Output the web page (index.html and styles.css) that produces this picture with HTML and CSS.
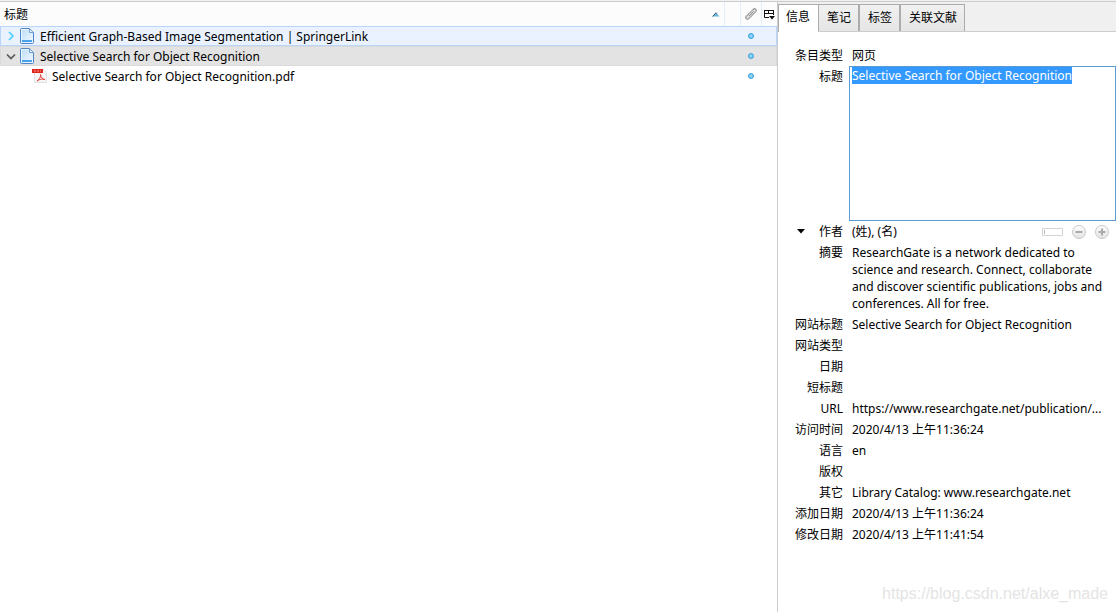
FILE: index.html
```html
<!DOCTYPE html>
<html lang="zh-CN">
<head>
<meta charset="utf-8">
<title>Zotero</title>
<link rel="stylesheet" href="styles.css">
</head>
<body>
<svg class="defs" aria-hidden="true">
  <defs>
    <linearGradient id="page-fill" x1="0" y1="0" x2="1" y2="1"><stop offset="0" stop-color="#b9dcf8"/><stop offset="1" stop-color="#f4faff"/></linearGradient>
    <linearGradient id="btn-fill" x1="0" y1="0" x2="0" y2="1"><stop offset="0" stop-color="#ffffff"/><stop offset="1" stop-color="#e2e2e2"/></linearGradient>
    <radialGradient id="dot-fill"><stop offset="0" stop-color="#a5e0fa"/><stop offset="1" stop-color="#62bdec"/></radialGradient>
    <symbol id="doc" viewBox="0 0 16 16">
      <path d="M.5 1.500a1 1 0 0 1 1-1H9.500l4 4v10a1 1 0 0 1-1 1h-11a1 1 0 0 1-1-1z" fill="url(#page-fill)" stroke="#5286c6"/>
      <path d="M1.500 14V1.500H9" fill="none" stroke="#e9f5ff"/>
      <path d="M9.500 1v3.500h4z" fill="#fff" stroke="#6f9fd3"/>
      <path d="M2 13h10" stroke="#4aa3ea" stroke-width="2"/>
    </symbol>
    <symbol id="dot" viewBox="0 0 6 6">
      <circle cx="3" cy="3" r="2.500" fill="url(#dot-fill)" stroke="#3ea3da"/>
    </symbol>
  </defs>
</svg>
<div class="window">
  <main class="items">
    <table class="tree">
      <colgroup><col><col class="col-spare"><col class="col-clip"><col class="col-picker"></colgroup>
      <thead>
        <tr>
          <th scope="col"><button class="head-btn sort" type="button"><span>标题</span><svg width="8" height="5" viewBox="0 0 8 5" aria-hidden="true"><path d="M.5 4.500 4 .8l3.500 3.700z" fill="#6fb3d8"/><path d="M.5 4.500 4 .8l1 1" fill="none" stroke="#2f5f7c"/></svg></button></th>
          <th scope="col"></th>
          <th scope="col"><button class="head-btn center" type="button" aria-label="附件"><svg width="12" height="12" viewBox="0 0 12 12" fill="none"><path d="M2.500 9.500 9.500 2.500" stroke="#8c8c8c" stroke-width="4.500" stroke-linecap="round"/><path d="M2.500 9.500 9.500 2.500" stroke="#dcdcdc" stroke-width="2.500" stroke-linecap="round"/><path d="M4 8l4.500-4.500" stroke="#8c8c8c"/></svg></button></th>
          <th scope="col"><button class="head-btn center" type="button" aria-label="选择列"><svg width="11" height="11" viewBox="0 0 11 11" fill="none"><path d="M5 8.500H.500V1.500h9V6M1 4.500h8M4.500 2v3" stroke="#111"/><path d="M0 1.500h10" stroke="#111"/><path d="M5 7h6L8 10.500z" fill="#111"/></svg></button></th>
        </tr>
      </thead>
      <tbody>
        <tr class="hovered">
          <td><div class="cell"><button class="twisty" type="button" aria-label="展开"><svg width="9" height="10" viewBox="0 0 9 10" fill="none"><path d="M2 1l4 4-4 4" stroke="#4ed0f9" stroke-width="1.700"/></svg></button><svg class="icon" aria-hidden="true"><use href="#doc"/></svg><span>Efficient Graph-Based Image Segmentation | SpringerLink</span></div></td>
          <td></td><td class="mark"><svg width="6" height="6"><use href="#dot"/></svg></td><td></td>
        </tr>
        <tr class="selected">
          <td><div class="cell"><button class="twisty" type="button" aria-label="折叠"><svg width="10" height="9" viewBox="0 0 10 9" fill="none"><path d="M1 2.500l4 4 4-4" stroke="#595959" stroke-width="1.700"/></svg></button><svg class="icon" aria-hidden="true"><use href="#doc"/></svg><span>Selective Search for Object Recognition</span></div></td>
          <td></td><td class="mark"><svg width="6" height="6"><use href="#dot"/></svg></td><td></td>
        </tr>
        <tr>
          <td><div class="cell child"><svg class="icon" viewBox="0 0 16 16" aria-hidden="true"><path d="M2.500 1.500h9l3 3v10h-12z" fill="#f6f6f6" stroke="#e2e2e2"/><path d="M0 1h11v4H0z" fill="#e2231a"/><path d="M2 3h7" stroke="#f6a09b" stroke-dasharray="2 1"/><path d="M5 13c2-1 4-4 3.500-6.500C9 10 11 11.500 13 11.500 10 10.500 7 11.500 5 13z" fill="none" stroke="#e2443c"/></svg><span>Selective Search for Object Recognition.pdf</span></div></td>
          <td></td><td class="mark"><svg width="6" height="6"><use href="#dot"/></svg></td><td></td>
        </tr>
      </tbody>
    </table>
  </main>
  <aside class="details">
    <div class="tabs" role="tablist">
      <button class="tab active" role="tab" aria-selected="true" type="button">信息</button>
      <button class="tab" role="tab" aria-selected="false" type="button">笔记</button>
      <button class="tab" role="tab" aria-selected="false" type="button">标签</button>
      <button class="tab" role="tab" aria-selected="false" type="button">关联文献</button>
    </div>
    <div class="fields">
      <div class="label">条目类型</div><div class="value">网页</div>
      <label class="label" for="title">标题</label><div class="editor"><textarea id="title" class="title-box" spellcheck="false">Selective Search for Object Recognition</textarea></div>
      <div class="label creator"><button class="icon-btn" type="button" aria-label="作者类型"><svg width="8" height="5" viewBox="0 0 8 5"><path d="M0 0h8L4 4.500z" fill="#000"/></svg></button><span>作者</span></div>
      <div class="value names"><span>(姓), (名)</span>
        <span class="actions">
          <button class="icon-btn" type="button" aria-label="切换为单栏"><svg width="21" height="8" viewBox="0 0 21 8" fill="none"><path d="M.5.5h20v7H.5z" stroke="#d4d4d4"/><path d="M2.500 2v4" stroke="#bbb"/></svg></button>
          <button class="icon-btn" type="button" aria-label="删除"><svg width="14" height="14" viewBox="0 0 14 14"><circle cx="7" cy="7" r="6.500" fill="url(#btn-fill)" stroke="#c8c8c8"/><path d="M3.500 7h7" stroke="#aaa" stroke-width="2"/></svg></button>
          <button class="icon-btn" type="button" aria-label="添加"><svg width="14" height="14" viewBox="0 0 14 14"><circle cx="7" cy="7" r="6.500" fill="url(#btn-fill)" stroke="#c8c8c8"/><path d="M3.500 7h7M7 3.500v7" stroke="#aaa" stroke-width="2"/></svg></button>
        </span>
      </div>
      <div class="label">摘要</div><div class="value">ResearchGate is a network dedicated to science and research. Connect, collaborate and discover scientific publications, jobs and conferences. All for free.</div>
      <div class="label">网站标题</div><div class="value">Selective Search for Object Recognition</div>
      <div class="label">网站类型</div><div class="value"></div>
      <div class="label">日期</div><div class="value"></div>
      <div class="label">短标题</div><div class="value"></div>
      <div class="label">URL</div><div class="value">https://www.researchgate.net/publication/...</div>
      <div class="label">访问时间</div><div class="value">2020/4/13 上午11:36:24</div>
      <div class="label">语言</div><div class="value">en</div>
      <div class="label">版权</div><div class="value"></div>
      <div class="label">其它</div><div class="value">Library Catalog: www.researchgate.net</div>
      <div class="label">添加日期</div><div class="value">2020/4/13 上午11:36:24</div>
      <div class="label">修改日期</div><div class="value">2020/4/13 上午11:41:54</div>
    </div>
    <div class="watermark">https://blog.csdn.net/alxe_made</div>
  </aside>
</div>
<script src="script.js"></script>
</body>
</html>
```
FILE: styles.css
```css
* { box-sizing: border-box; }
body {
  margin: 0;
  background: #fff;
  color: #000;
  font: 12px/17px "Noto Sans", "Noto Sans CJK SC", sans-serif;
}
button, textarea { font: inherit; color: inherit; }
button { padding: 0; border: 0; background: none; }
svg { display: block; flex: none; }
.defs { position: absolute; width: 0; height: 0; }

.window {
  display: grid;
  grid-template-columns: minmax(0, 1fr) 339px;
  min-height: 100vh;
  border-top: 1px solid #f0f0f0;
}
.items { border-top: 1px solid #ccc; }

.tree { width: 100%; table-layout: fixed; border-collapse: separate; border-spacing: 0; }
.col-spare { width: 16px; }
.col-clip { width: 21px; }
.col-picker { width: 15px; }
.tree th {
  height: 24px;
  padding: 0;
  background: #fcfcfc;
  border-right: 1px solid #e4eef8;
  font-weight: 400;
}
.tree th:last-child { border-right: 0; }
.head-btn { display: flex; align-items: center; width: 100%; height: 24px; }
.sort { justify-content: space-between; padding: 0 4px; }
.center { justify-content: center; }
.tree td { height: 20px; padding: 0; border: 0 solid transparent; border-width: 1px 0; }
.tree td:first-child { border-left-width: 1px; }
.tree td:last-child { border-right-width: 1px; }
.hovered td { background: #e9f2fe; border-color: #b8d6fb; }
.selected td { background: #e3e3e3; border-color: #dadada; }
.cell { display: flex; align-items: center; gap: 4px; height: 18px; padding-left: 5px; white-space: nowrap; }
.child { padding-left: 31px; }
.twisty { display: flex; justify-content: center; width: 10px; }
.icon { width: 16px; height: 16px; }
.tree .mark { padding-right: 1px; }
.mark svg { margin: 0 auto; }

.details { display: flex; flex-direction: column; border-left: 1px solid #ccc; }
.tabs {
  display: flex;
  align-items: flex-end;
  height: 31px;
  border-top: 1px solid #ccc;
  border-bottom: 1px solid #ccc;
  background: #f0f0f0;
}
.tab {
  height: 27px;
  padding: 0 7px 2px 8px;
  border: 1px solid #acacac;
  border-bottom: 0;
  background: linear-gradient(#f1f1f1, #e5e5e5);
}
.tab.active {
  height: 28px;
  margin-bottom: -1px;
  padding: 0 8px 4px 7px;
  border-right: 0;
  background: #fff;
}

.fields {
  display: grid;
  grid-template-columns: 65px minmax(0, 1fr);
  column-gap: 6px;
  padding-top: 13px;
}
.label { padding: 2px 0; text-align: right; }
.value { padding: 2px 7px 2px 3px; min-height: 21px; }
.editor { display: flex; }
.title-box {
  width: 100%;
  height: 155px;
  padding: 0 2px;
  border: 1px solid #5b9bd5;
  outline: 0;
  resize: none;
  overflow: hidden;
}
.title-box::selection { background: #39f; color: #fff; }
.creator, .names { display: flex; align-items: center; justify-content: space-between; }
.creator { padding-left: 19px; }
.actions { display: flex; align-items: center; gap: 9px; }
.icon-btn { display: flex; }
.watermark {
  margin-top: auto;
  padding: 0 8px 8px 0;
  text-align: right;
  font: 16px/20px "Liberation Sans", Arial, sans-serif;
  color: #e4e4e4;
}
```
FILE: script.js
```js
const title = document.getElementById("title");
title.focus();
title.select();
```
